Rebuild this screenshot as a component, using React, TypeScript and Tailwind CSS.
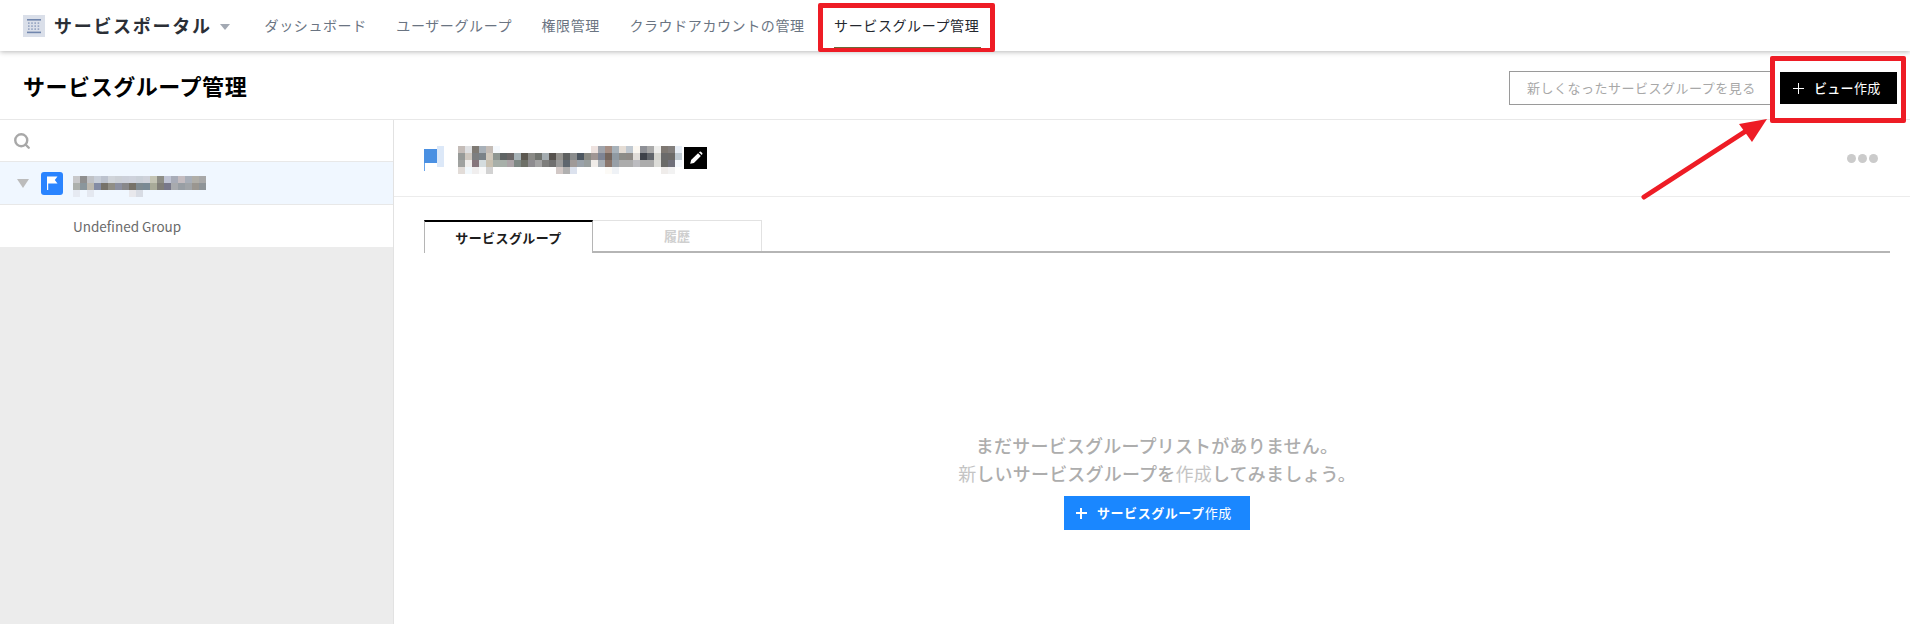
import { Search } from 'lucide-react'

const font = { fontFamily: '"Noto Sans CJK JP", "Noto Sans", sans-serif' }

const navItems = ['ダッシュボード', 'ユーザーグループ', '権限管理', 'クラウドアカウントの管理']

// blurred-out names, one colour per 7px block ('' = no block)
const viewNameBlocks = [
  ['#c4bcb8', '#dfe0e2', '#7f7a74', '#a8b0b8', '#c4bcb6', '#f5f9fd', '', '', '', '', '', '', '', '', '', '', '', '', '', '#eee2df', '#a0a4ac', '#a68f85', '#a8b2ba', '#e5ddd5', '#c0c8d0', '#fcf8f2', '#8e9096', '#a9a9a9', '#eeeeec', '#7e7872', '#827e7c', '#e8eef6'],
  ['#979a98', '#cfc8c0', '#7c7e80', '#7a8288', '#d0c8bc', '#8e9692', '#5f6464', '#6a6666', '#a6b2b6', '#5c5850', '#8a8a86', '#70736e', '#a4acb0', '#56524e', '#94928e', '#5e6060', '#8a8c8c', '#4c5660', '#8a8a84', '#a09694', '#7e8494', '#75665e', '#909aa2', '#8c8c88', '#8e8a86', '#e0dcd8', '#3e424a', '#60646a', '#d4d4ce', '#6a6a6a', '#6c6a68', '#c0cad2'],
  ['#a0a2a0', '#f0eeec', '#86767c', '#d4dcde', '#c8c0b0', '#a8b0aa', '#a8b0aa', '#aca4a8', '#7e8884', '#6e7068', '#8e8c90', '#a4a4a4', '#7e7e7c', '#707070', '#9a9a9a', '#5e666e', '#a09a98', '#9aa2aa', '#989e9e', '#f0ece8', '#a8aeb4', '#8a766c', '#98a0a8', '#acacac', '#acacac', '#bcbcc0', '#acacac', '#acacac', '#dcdcd8', '#6a6a68', '#70707a', '#f4f8fc'],
  ['#e2dcd8', '#f2f8fc', '#f0eeee', '#fafafa', '#d2d2d2', '', '', '', '', '', '', '', '', '', '#d2c8c6', '#b0b0b0', '#dce2ee', '', '', '', '', '#fcfaf6', '#eff2f6', '', '', '', '', '', '', '#efecea', '#f2f2f2', ''],
]

const treeNameBlocks = [
  ['#c8c8ca', '#8f8f8f', '#c0c2c6', '#c8ced8', '#bcc2ce', '#d0d4da', '#ccd0d6', '#ccd0da', '#ced2dc', '#cad0d8', '#cfd2da', '#c4c4b4', '#8e8e86', '#c0c4d4', '#a8acb8', '#c4bcc0', '#a8aeb8', '#b0aea8', '#a8a8a8'],
  ['#acb0ac', '#8a969c', '#bcb8ae', '#848ca4', '#76726a', '#908e86', '#8c90a0', '#88888a', '#767268', '#7e8a90', '#7a8a94', '#a8aa98', '#807e78', '#78788a', '#a8aaae', '#989ea4', '#a0a4a8', '#9a9690', '#8e9498'],
  ['#e6eaf2', '', '#e4e8f0', '', '', '', '', '', '#e8e8ec', '#d8dce4', '', '', '', '', '', '', '', '', ''],
]

function Mosaic({ blocks }: { blocks: string[][] }) {
  const cols = blocks[0].length
  return (
    <svg width={cols * 7} height={blocks.length * 7} shapeRendering="crispEdges" className="block shrink-0">
      {blocks.map((row, y) =>
        row.map((color, x) => (color ? <rect key={`${x}-${y}`} x={x * 7} y={y * 7} width="7" height="7" fill={color} /> : null)),
      )}
    </svg>
  )
}

function PortalIcon() {
  return (
    <svg width="22" height="22" viewBox="0 0 22 22" className="shrink-0">
      <rect width="22" height="22" fill="#dadfe9" />
      <rect x="4" y="4" width="14" height="1.6" fill="#7186ad" />
      <rect x="4" y="16.6" width="14" height="1.6" fill="#7186ad" />
      {[8, 11, 14].map((y) =>
        [5, 8.2, 11.4, 14.6].map((x) => <rect key={`${x}-${y}`} x={x} y={y - 0.6} width="1.6" height="1.4" fill="#8a9bbb" />),
      )}
    </svg>
  )
}

export default function App() {
  return (
    <div style={font} className="relative flex h-[624px] w-[1910px] flex-col overflow-hidden bg-white">
      <header className="relative flex h-[51px] shrink-0 items-center bg-white pl-[23px] shadow-[0_1px_5px_rgba(0,0,0,0.28)]">
        <PortalIcon />
        <span className="ml-[9px] text-[18px] font-bold tracking-[1.7px] text-[#2b2f36]">サービスポータル</span>
        <span className="ml-[8px] mt-[3px] h-0 w-0 border-x-[5px] border-t-[6px] border-x-transparent border-t-[#a3a9b3]" />
        <nav className="ml-[35px] flex items-center gap-[29.5px] text-[14px] tracking-[0.6px] text-[#6a7482]">
          {navItems.map((item) => (
            <span key={item}>{item}</span>
          ))}
          <span className="flex h-[51px] items-center text-[#23272e]">サービスグループ管理</span>
        </nav>
      </header>

      <div className="flex h-[69px] shrink-0 items-center justify-between border-b border-[#e8e8e8] pl-[23px] pr-[13px]">
        <h1 className="text-[22px] font-bold tracking-[0.55px] text-black">サービスグループ管理</h1>
        <div className="mt-[6px] flex items-center gap-[8px]">
          <button className="flex h-[34px] w-[263px] items-center border border-[#9a9a9a] pl-[17px] text-[13px] tracking-[0.5px] text-[#a8a8a8]">
            新しくなったサービスグループを見る
          </button>
          <button className="flex h-[32px] w-[117px] items-center bg-black pl-[13px] text-[13px] font-medium tracking-[0.3px] text-white">
            <span className="relative mr-[10px] h-[11px] w-[11px]">
              <span className="absolute left-0 top-[5px] h-px w-[11px] bg-white" />
              <span className="absolute left-[5px] top-0 h-[11px] w-px bg-white" />
            </span>
            ビュー<span className="font-normal">作成</span>
          </button>
        </div>
      </div>

      <div className="flex min-h-0 flex-1">
        <aside className="flex w-[394px] shrink-0 flex-col border-r border-[#e2e2e2] bg-[#ececec]">
          <div className="flex h-[42px] shrink-0 items-center border-b border-[#e8e8e8] bg-white pl-[13px]">
            <Search size={18} strokeWidth={3.2} className="text-[#a8a8a8]" />
          </div>
          <div className="flex h-[43px] shrink-0 items-center border-b border-[#e8e8e8] bg-[#f0f7ff] pl-[17px]">
            <span className="h-0 w-0 border-x-[6px] border-t-[9px] border-x-transparent border-t-[#bcbcbc]" />
            <span className="ml-[12px] flex h-[23px] w-[22px] items-center justify-center rounded-[3px] bg-[#2a84ff]">
              <svg width="12" height="14" viewBox="0 0 12 14">
                <path d="M1 0.5h10.5L8.8 4l2.7 3.5H2.2V14H1z" fill="#fff" />
              </svg>
            </span>
            <span className="ml-[10px] mt-[6px]">
              <Mosaic blocks={treeNameBlocks} />
            </span>
          </div>
          <div className="flex h-[42px] shrink-0 items-center bg-white pl-[73px] text-[13.5px] text-[#6a6a6a]">Undefined Group</div>
        </aside>

        <main className="flex min-w-0 flex-1 flex-col">
          <div className="flex h-[77px] shrink-0 items-center border-b border-[#ececec] pl-[30px] pr-[32px]">
            <svg width="20" height="25" viewBox="0 0 20 25" className="shrink-0" shapeRendering="crispEdges">
              <rect x="13" y="0" width="7" height="21" fill="#dce8f8" />
              <rect x="0" y="3" width="13" height="14" fill="#4a90e2" />
              <rect x="0" y="17" width="1" height="8" fill="#6aa5ea" />
            </svg>
            <span className="ml-[14px] mt-[3px]">
              <Mosaic blocks={viewNameBlocks} />
            </span>
            <button className="ml-[2px] flex h-[22px] w-[23px] items-center justify-center bg-black">
              <svg width="14" height="14" viewBox="0 0 24 24" fill="#fff">
                <path d="M2 22l1.6-6.4L15.5 3.7l4.8 4.8L8.4 20.4z" />
                <path d="M17 2.2l1.4-1a1.6 1.6 0 0 1 2 .1l2.3 2.3a1.6 1.6 0 0 1 .1 2l-1 1.4z" />
              </svg>
            </button>
            <div className="ml-auto flex gap-[2px]">
              <span className="h-[9px] w-[9px] rounded-full bg-[#cbcbcb]" />
              <span className="h-[9px] w-[9px] rounded-full bg-[#cbcbcb]" />
              <span className="h-[9px] w-[9px] rounded-full bg-[#cbcbcb]" />
            </div>
          </div>

          <div className="ml-[30px] mr-[20px] mt-[23px] flex h-[33px] shrink-0 border-b-2 border-[#b5b5b5]">
            <div className="-mb-[2px] flex h-[33px] w-[169px] items-center justify-center border-x border-t-2 border-x-[#b5b5b5] border-t-black bg-white text-[13px] font-bold tracking-[0.4px] text-[#1c1c1c]">
              サービスグループ
            </div>
            <div className="flex w-[169px] items-center justify-center border-r border-t border-[#e2e2e2] text-[13px] font-bold text-[#cfcfcf]">
              履歴
            </div>
          </div>

          <div className="mt-[178px] flex flex-col items-center">
            <p className="ml-[10px] text-center text-[18px] font-medium leading-[28px] tracking-[0.2px] text-[#adadad]">
              まだサービスグループリストがありません。
              <br />
              <span className="font-normal text-[#c4c4c4]">新</span>しいサービスグループを
              <span className="font-normal text-[#c4c4c4]">作成</span>してみましょう。
            </p>
            <button className="ml-[10px] mt-[9px] flex h-[34px] w-[186px] items-center bg-[#1a87ff] pl-[12px] text-[13px] font-bold tracking-[0.55px] text-white">
              <span className="relative mr-[10px] h-[11px] w-[11px]">
                <span className="absolute left-0 top-[4px] h-[2px] w-[11px] bg-white" />
                <span className="absolute left-[4px] top-0 h-[11px] w-[2px] bg-white" />
              </span>
              サービスグループ<span className="font-normal">作成</span>
            </button>
          </div>
        </main>
      </div>

      {/* red annotations drawn over the screenshot */}
      <div className="absolute left-[818px] top-[3px] h-[49px] w-[177px] rounded-[2px] border-[5px] border-b-[4px] border-[#ee1c25]">
        <span className="absolute bottom-0 left-[11px] h-px w-[147px] bg-[#6b6b3a]" />
      </div>
      <div className="absolute left-[1770px] top-[56px] h-[67px] w-[136px] rounded-[2px] border-[5px] border-[#ee1c25]" />
      <svg className="absolute left-[1636px] top-[113px]" width="140" height="92" viewBox="0 0 140 92">
        <path d="M8 84 L110 18" stroke="#ee1c25" strokeWidth="5" strokeLinecap="round" />
        <path d="M131 6 L103 11 L116 29 Z" fill="#ee1c25" />
      </svg>
    </div>
  )
}
